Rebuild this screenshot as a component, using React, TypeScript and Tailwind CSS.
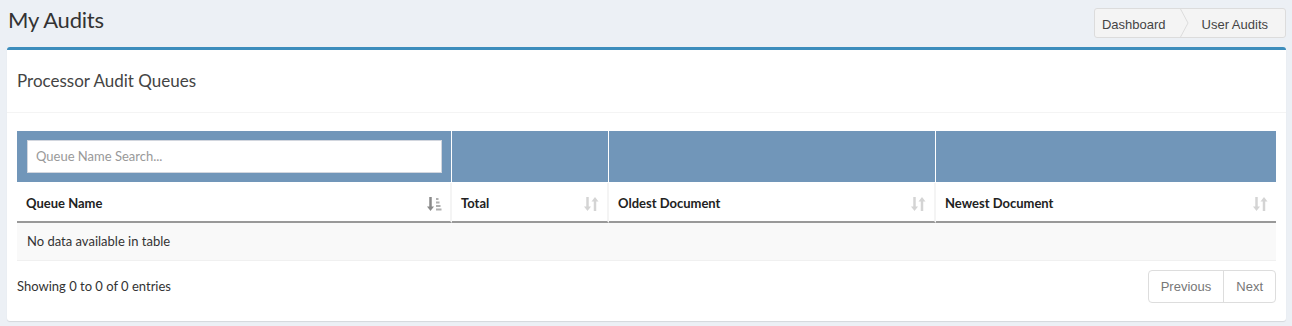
import React from 'react';

const font = { fontFamily: 'Lato, "Noto Sans", sans-serif' };

const SortIcon: React.FC<{ active?: boolean }> = ({ active }) => (
  <svg width="15" height="18" viewBox="0 0 15 18" className="shrink-0">
    {active ? (
      <g>
        <path d="M3.5 2v11" stroke="#8a8a8a" strokeWidth="2.5" />
        <path d="M0 11.5h7L3.5 16z" fill="#8a8a8a" />
        <rect x="9" y="3" width="2.5" height="2" fill="#b0b0b0" />
        <rect x="9" y="6.5" width="3.5" height="2" fill="#b0b0b0" />
        <rect x="9" y="10" width="4.5" height="2" fill="#b0b0b0" />
        <rect x="9" y="13.5" width="5.5" height="2" fill="#b0b0b0" />
      </g>
    ) : (
      <g fill="#d4d4d4">
        <path d="M3.5 2v11" stroke="#d4d4d4" strokeWidth="2.5" />
        <path d="M0 11.5h7L3.5 16z" />
        <path d="M11 16V5" stroke="#d4d4d4" strokeWidth="2.5" />
        <path d="M7.5 6.5h7L11 2z" />
      </g>
    )}
  </svg>
);

const HeadCell: React.FC<{ label: string; active?: boolean; className: string }> = ({ label, active, className }) => (
  <div className={`flex items-center justify-between pl-[9px] pr-[8px] pt-[4px] h-[40px] ${className}`}>
    <span className="text-[13px] font-bold text-[#222]">{label}</span>
    <SortIcon active={active} />
  </div>
);

export default function App() {
  return (
    <div className="w-[1292px] h-[326px] bg-[#ecf0f5] text-[#333] overflow-hidden" style={font}>
      {/* page header */}
      <div className="flex items-start justify-between pl-[8px] pr-[6px] h-[47px]">
        <h1 className="text-[22px] leading-[28px] mt-[6px] tracking-[-0.01em] text-[#333]">My Audits</h1>
        <div className="mt-[8px] flex items-stretch h-[30px] bg-[#f4f4f4] border border-[#dcdcdc] rounded-[3px] text-[13px] text-[#444] pt-[3px]" style={{ fontFamily: '"Liberation Sans", Arial, sans-serif' }}>
          <span className="flex items-center pl-[7px] pr-[13px]">Dashboard</span>
          <svg width="10" height="30" viewBox="0 0 10 30" className="-mt-[4px] h-[30px]">
            <path d="M1 0 L9 15 L1 30" fill="none" stroke="#dcdcdc" strokeWidth="1" />
          </svg>
          <span className="flex items-center pl-[13px] pr-[17px]">User Audits</span>
        </div>
      </div>

      {/* card */}
      <div className="ml-[7px] mr-[6px] bg-white border-t-[3px] border-[#3c8dbc] rounded-[3px] shadow-[0_1px_1px_rgba(0,0,0,0.1)] h-[274px]">
        <div className="h-[63px] flex items-center px-[10px] border-b border-[#f4f4f4]">
          <h3 className="text-[17px] text-[#444]">Processor Audit Queues</h3>
        </div>

        <div className="px-[10px] pt-[18px]">
          <div className="grid grid-cols-[435px_157px_327px_1fr]">
            {/* filter row */}
            <div className="bg-[#7196b9] h-[51px] flex items-center pl-[10px] pr-[9px] border-r border-white">
              <div className="w-full h-[33px] bg-white border border-[#d2d6de] flex items-center px-[8px] text-[13px] text-[#999]">
                Queue Name Search...
              </div>
            </div>
            <div className="bg-[#7196b9] h-[51px] border-r border-white" />
            <div className="bg-[#7196b9] h-[51px] border-r border-white" />
            <div className="bg-[#7196b9] h-[51px]" />

            {/* header row */}
            <HeadCell label="Queue Name" active className="border-r-2 border-[#f4f4f4] border-b-2 border-b-[#999] mt-px" />
            <HeadCell label="Total" className="border-r-2 border-[#f4f4f4] border-b-2 border-b-[#999] mt-px" />
            <HeadCell label="Oldest Document" className="border-r-2 border-[#f4f4f4] border-b-2 border-b-[#999] mt-px" />
            <HeadCell label="Newest Document" className="border-b-2 border-b-[#999] mt-px" />
          </div>
          <div className="h-[38px] bg-[#f9f9f9] border-b border-[#f0f0f0] flex items-center px-[10px] text-[13px] text-[#333]">
            No data available in table
          </div>

          {/* footer */}
          <div className="flex items-center justify-between mt-[9px]">
            <span className="text-[13px] text-[#333]">Showing 0 to 0 of 0 entries</span>
            <div className="flex h-[33px] border border-[#ddd] rounded-[4px] text-[13px] text-[#777]" style={{ fontFamily: '"Liberation Sans", Arial, sans-serif' }}>
              <span className="flex items-center px-[12px] border-r border-[#ddd]">Previous</span>
              <span className="flex items-center px-[12px]">Next</span>
            </div>
          </div>
        </div>
      </div>
    </div>
  );
}
